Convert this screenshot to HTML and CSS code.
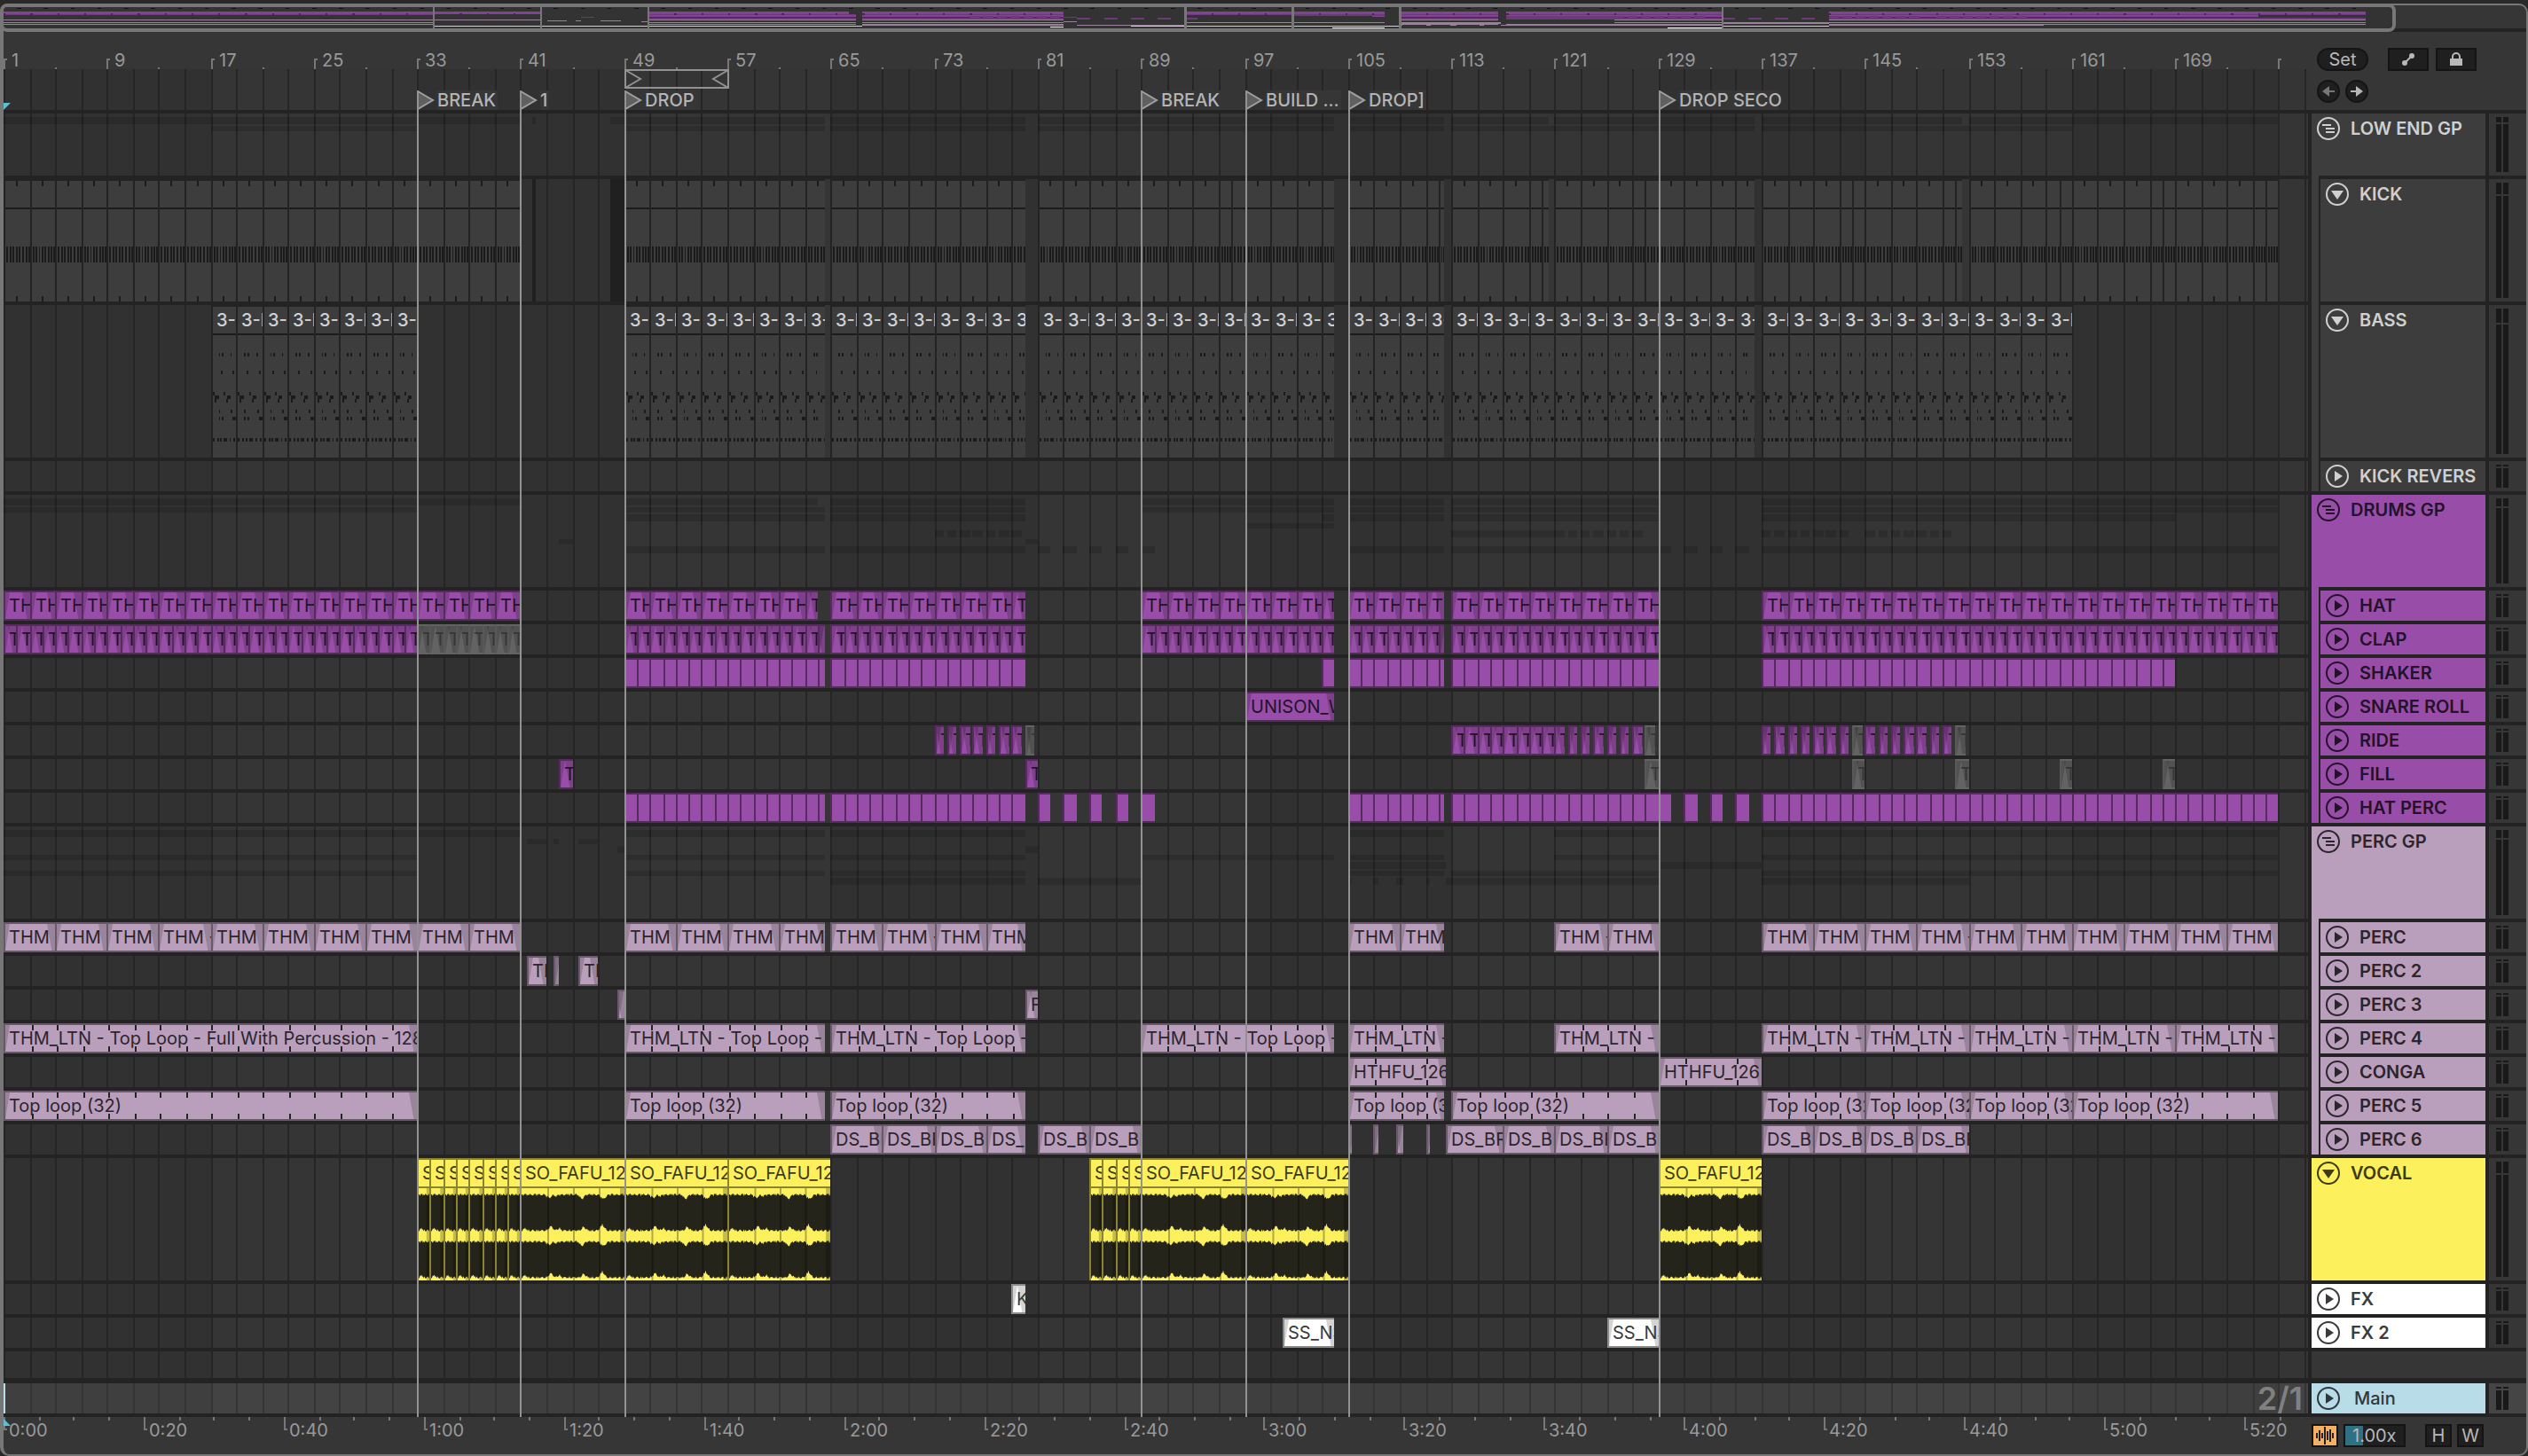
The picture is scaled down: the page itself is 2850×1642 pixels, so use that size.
FILE: index.html
```html
<!DOCTYPE html>
<html lang="en">
  <head>
    <meta charset="UTF-8" />
    <title>Arrangement</title>
    <link rel="stylesheet" href="styles.css">
  </head>
  <body>
    <div class="app">
      <div class="overview">
        <div class="overview-box">
          <svg id="overview" viewBox="1 0 178 24" preserveAspectRatio="none"></svg>
        </div>
      </div>

      <div class="arrange">
        <div class="grid"><div class="scale" id="grid"></div></div>

        <div class="top">
          <div class="beat-ruler">
            <div class="scale" id="bars"></div>
            <div class="scale" id="locators"></div>
            <svg class="start-mark" viewBox="0 0 8 8"><path d="M0 0h8L0 8z" /></svg>
          </div>
          <div class="top-controls">
            <div class="control-row">
              <button class="pill">Set</button>
              <button class="square first" aria-label="Automation">
                <svg viewBox="0 0 16 16"><path d="M4 12 12 4" stroke="#b8b8b8" stroke-width="2" /><circle cx="4" cy="12" r="3" /><circle cx="12" cy="4" r="3" /></svg>
              </button>
              <button class="square" aria-label="Lock envelopes">
                <svg viewBox="0 0 16 16"><path d="M1 7h14v8H1z" /><path d="M4 8V5a4 4 0 0 1 8 0v3" fill="none" stroke="#b8b8b8" stroke-width="2" /></svg>
              </button>
            </div>
            <div class="control-row">
              <button class="round dim" aria-label="Previous locator">
                <svg viewBox="0 0 16 16"><path d="M1 8l8-6v5h6v2H9v5z" /></svg>
              </button>
              <button class="round" aria-label="Next locator">
                <svg viewBox="0 0 16 16"><path d="M15 8L7 2v5H1v2h6v5z" /></svg>
              </button>
            </div>
          </div>
        </div>

        <div id="tracks"></div>

        <div class="lines"><div class="scale" id="lines"></div></div>
      </div>

      <div class="bottom">
        <div class="time-ruler">
          <div class="scale" id="times"></div>
          <svg class="start-mark" viewBox="0 0 8 8"><path d="M0 0l8 8H0z" /></svg>
        </div>
        <div class="bottom-controls">
          <button class="wave-button" aria-label="Waveform zoom">
            <svg viewBox="0 0 22 22"><path d="M2 8v6M5 5v12M8 8v6M11 1v20M14 6v10M17 4v14M20 8v6" stroke="#222" stroke-width="2" /></svg>
          </button>
          <input class="speed" type="text" value="1.00x" aria-label="Zoom factor" />
          <button class="letter first">H</button>
          <button class="letter">W</button>
        </div>
      </div>
    </div>

    <script src="script.js"></script>
  </body>
</html>
```
FILE: styles.css
```css
* {
  box-sizing: border-box;
}

body {
  margin: 0;
  padding-top: 4px;
  background-color: #292929;
  font-family: Inter, "Liberation Sans", sans-serif;
  font-size: 20px;
  line-height: 24px;
  color: #c8c8c8;
}

button,
input {
  font: inherit;
  padding: 0;
  margin: 0;
}

button svg {
  display: block;
  margin: auto;
}

.app {
  border: 2px solid #777;
  border-left-width: 4px;
  border-radius: 10px;
  background-color: #363636;
}

/* overview */

.overview {
  display: flex;
  height: 30px;
  border-bottom: 4px solid #232323;
}

.overview-box {
  flex: 1;
  height: 32px;
  margin: -2px 147px 0 -4px;
  border: 4px solid #777;
  border-radius: 8px;
  background-color: #333;
}

.overview-box svg {
  display: block;
  width: 100%;
  height: 24px;
}

/* timeline scale, 178 bars wide */

.scale {
  position: relative;
  height: 100%;
  margin-right: 4px;
}

.at,
.clip,
.mini i {
  position: absolute;
  left: round(nearest, calc((var(--s) - 1) / 178 * 100%), 2px);
}

.clip,
.band,
.loop,
.mini i {
  width: calc(round(nearest, calc((var(--e) - 1) / 178 * 100%), 2px) - round(nearest, calc((var(--s) - 1) / 178 * 100%), 2px));
}

.arrange {
  position: relative;
}

.grid,
.lines {
  position: absolute;
  left: 0;
  right: 246px;
  bottom: 0;
}

.grid {
  top: 42px;
  overflow: hidden;
  background-color: #353535;
}

.lines {
  top: 66px;
  z-index: 3;
  pointer-events: none;
}

.band,
.grid-line,
.locator-line {
  top: 0;
  bottom: 0;
}

.band {
  background-color: #313131;
}

.grid-line {
  width: 2px;
  background-color: #252525;
}

.locator-line {
  width: 2px;
  background-color: #929292;
}

/* top */

.top {
  display: flex;
  height: 88px;
  position: relative;
}

.beat-ruler {
  flex: 1;
  position: relative;
}

#locators {
  position: absolute;
  top: 0;
  left: 0;
  right: 0;
}

.bar-tick {
  top: 30px;
  height: 12px;
  width: 4px;
  border-left: 2px solid #777;
  border-top: 2px solid #777;
}

.bar-tick.minor {
  top: 40px;
  height: 2px;
  width: 2px;
  border-top: 0;
}

.bar-number {
  top: 20px;
  padding-left: 9px;
  color: #999;
}

.loop {
  top: 42px;
  height: 22px;
}

.loop svg {
  display: block;
  height: 22px;
  width: 118px;
}

.locator {
  top: 66px;
  height: 22px;
  display: flex;
  gap: 3px;
  line-height: 22px;
  font-weight: 500;
  color: #b4b4b4;
}

.locator svg {
  width: 20px;
  height: 22px;
}

.locator span {
  max-width: 112px;
  padding-right: 2px;
  background-color: #363636;
  white-space: nowrap;
}

.start-mark {
  position: absolute;
  left: 0;
  bottom: 0;
  width: 8px;
  height: 8px;
  fill: #5bbfd6;
}

.time-ruler .start-mark {
  top: 2px;
  bottom: auto;
}

.top-controls {
  width: 246px;
  padding: 18px 0 0 10px;
}

.control-row {
  display: flex;
  height: 26px;
  margin-bottom: 10px;
}

.pill,
.square,
.round,
.letter {
  height: 26px;
  border: 2px solid #141414;
  background-color: #1f1f1f;
  color: #b8b8b8;
  fill: #b8b8b8;
  line-height: 22px;
}

.pill {
  width: 58px;
  border-radius: 13px;
}

.square {
  width: 46px;
  margin-left: 8px;
}

.square.first {
  margin-left: 22px;
}

.square svg,
.round svg {
  width: 16px;
  height: 16px;
}

.round {
  width: 26px;
  border-radius: 50%;
  margin-right: 6px;
}

.round.dim {
  fill: #777;
}

/* tracks */

.track {
  display: flex;
  height: 38px;
  position: relative;
}

.track.size-low {
  height: 74px;
}

.track.size-kick {
  height: 142px;
}

.track.size-bass {
  height: 176px;
}

.track.size-group {
  height: 108px;
}

.track.size-blank {
  height: 34px;
}

.track.main {
  height: 44px;
  border-bottom: 4px solid #232323;
}

.lane {
  flex: 1;
  min-width: 0;
  border-top: 4px solid #232323;
}

.main .lane,
.main .head,
.main .meter {
  border-top-width: 6px;
}

.main .lane {
  position: relative;
  background-color: rgba(255, 255, 255, 0.07);
}

.main .scale {
  border-left: 2px solid #b8dce8;
}

.zoom-ratio {
  position: absolute;
  right: 6px;
  top: 0;
  font-size: 36px;
  line-height: 34px;
  font-weight: 600;
  color: #808080;
}

.strip {
  width: 12px;
  border-left: 4px solid #232323;
  background-color: var(--color);
}

.head {
  width: 200px;
  display: flex;
  gap: 12px;
  padding: 4px 0 0 6px;
  border-top: 4px solid #232323;
  border-left: 4px solid #232323;
  background-color: var(--color);
  background-clip: padding-box;
  color: var(--ink);
  font-weight: 600;
  line-height: 26px;
  white-space: nowrap;
  overflow: hidden;
}

.strip + .head {
  width: 188px;
  border-left-width: 2px;
}

.main .head {
  gap: 16px;
  font-weight: 500;
}

.fold {
  width: 26px;
  height: 26px;
  flex: none;
  border: 0;
  background: none;
  color: inherit;
}

.fold svg {
  width: 26px;
  height: 26px;
  fill: none;
  stroke: currentColor;
  stroke-width: 2;
}

.fold .solid {
  fill: currentColor;
  stroke: none;
}

.meter {
  width: 46px;
  display: grid;
  grid-template-columns: 6px 6px;
  grid-template-rows: 1fr 9fr;
  gap: 2px;
  padding: 4px 0 4px 8px;
  border-top: 4px solid #232323;
  border-left: 4px solid #232323;
  background-color: #363636;
}

.meter i {
  background-color: #191919;
}

.main .meter {
  background-color: #454545;
}

.blank-head {
  width: 246px;
  border-top: 4px solid #232323;
  border-left: 4px solid #232323;
  background-color: #363636;
}

.gray {
  --color: #3d3d3d;
  --edge: #232323;
  --ink: #d0d0d0;
}

.purple {
  --color: #984ea8;
  --edge: #562c5f;
  --ink: #231228;
}

.pink {
  --color: #b99fbc;
  --edge: #685969;
  --ink: #2b252c;
}

.yellow {
  --color: #fcf15d;
  --edge: #8a8333;
  --ink: #3d3b17;
}

.white {
  --color: #fff;
  --edge: #8b8b8b;
  --ink: #3b3b3b;
}

.blue {
  --color: #b8dce8;
  --ink: #2f383b;
}

/* clips */

.clip {
  top: 0;
  bottom: 0;
  overflow: hidden;
  border: 2px solid var(--edge);
  border-right: 0;
  background-color: var(--color);
  color: var(--ink);
}

.clip.fade::before,
.clip.fade::after {
  content: "";
  position: absolute;
  top: 0;
  bottom: 0;
  background-color: rgba(0, 0, 0, 0.17);
}

.clip.fade::before {
  left: 0;
  width: 5px;
  clip-path: polygon(0 0, 100% 0, 0 100%);
}

.clip.fade::after {
  right: 0;
  width: 9px;
  clip-path: polygon(0 0, 100% 0, 100% 100%, 60% 100%);
}

.clip.muted {
  --color: #636363;
  --ink: #363636;
  border-color: #585858;
  border-top-color: #636363;
  border-bottom-color: #636363;
}

.clip span {
  position: relative;
  z-index: 1;
  display: block;
  padding-left: 4px;
  line-height: 30px;
  white-space: nowrap;
}

.clip.gray span {
  font-weight: 500;
}

.clip .tick {
  position: absolute;
  left: round(nearest, var(--at), 2px);
  top: 0;
  bottom: 0;
  width: 2px;
  border-top: 6px solid #242424;
  border-bottom: 6px solid #242424;
}

.clip svg {
  position: absolute;
  left: 0;
  width: 100%;
}

.size-kick .gray.clip,
.size-bass .gray.clip {
  border-bottom: 0;
}

.clip.dark {
  border: 0;
  background-color: #202020;
}

.clip.yellow {
  border-bottom: 0;
}

.clip .header-line {
  height: 2px;
  background-color: var(--edge);
}

.clip .notes {
  top: 0;
  height: 100%;
  fill: #1b1b1b;
}

.clip .wave {
  top: 32px;
  height: 104px;
  fill: #25241a;
}

.minis {
  padding-top: 4px;
}

.mini {
  position: relative;
  height: 8px;
  margin-bottom: 2px;
}

.mini:nth-child(even) {
  height: 6px;
}

.mini i {
  top: 0;
  bottom: 0;
  background-color: rgba(0, 0, 0, 0.14);
}

/* bottom */

.bottom {
  display: flex;
  height: 42px;
}

.time-ruler {
  flex: 1;
  position: relative;
}

.time-tick {
  top: 0;
  height: 15px;
  width: 4px;
  border-left: 2px solid #777;
  border-bottom: 2px solid #777;
}

.time-tick.minor {
  height: 4px;
  width: 2px;
  border-bottom: 0;
}

.time {
  top: 3px;
  padding-left: 6px;
  color: #999;
}

.bottom-controls {
  width: 246px;
  display: flex;
  padding: 8px 0 0 4px;
}

.wave-button {
  width: 30px;
  height: 26px;
  border: 2px solid #141414;
  background-color: #f6b065;
}

.wave-button svg {
  width: 22px;
  height: 22px;
}

.speed {
  width: 70px;
  height: 26px;
  margin-left: 6px;
  padding-left: 8px;
  border: 2px solid #141414;
  border-radius: 0;
  background: linear-gradient(to right, #2f7182 20px, #1f1f1f 20px);
  color: #b8b8b8;
}

.letter {
  width: 30px;
  margin-left: 6px;
}

.letter.first {
  margin-left: 22px;
}
```
FILE: script.js
```javascript
// repeat(start, end, step) cuts a range of bars into clips
function repeat(start, end, step, extra) {
  const out = [];
  for (let s = start; s < end; s += step) {
    out.push({ s: s, e: Math.min(s + step, end), ...extra });
  }
  return out;
}

function cut(ranges, step, extra) {
  return ranges.flatMap(([s, e]) => repeat(s, e, step, extra));
}

function whole(ranges, extra) {
  return ranges.map(([s, e]) => ({ s: s, e: e, ...extra }));
}

// kick clips also break one bar before some of the sections
const kickBreaks = [96, 112, 120, 128, 144, 152, 160, 168, 176];

function kick(ranges) {
  return cut(ranges, 2).flatMap((c) => {
    const mid = c.s + 1;
    return kickBreaks.includes(mid) && c.e > mid
      ? [{ s: c.s, e: mid }, { s: mid, e: c.e }]
      : [c];
  });
}

function each(bars, length, extra) {
  return bars.map((b) => ({ s: b, e: b + length, ...extra }));
}

const muted = { muted: true };
const main = [[49, 64.5], [65, 80]];
const late = [[105, 112.4], [113, 129], [137, 177]];

const clips = {
  kick: [
    ...kick([[1, 41], [49, 64.5], [65, 80], [81, 103.9], [105, 112.4], [113, 120.5], [121, 136.5], [137, 152.5], [153, 177]]),
    { s: 41.9, e: 42.2, dark: true },
    { s: 48, e: 49, dark: true },
  ],
  bass: cut([[17, 33], ...main, [81, 103.9], [105, 112.4], [113, 136.5], [137, 161]], 2),
  kickrev: [],
  hat: cut([[1, 41], [49, 64], [65, 80], [89, 103.9], ...late], 2),
  clap: [...cut([[1, 33], ...main, [89, 103.9], ...late], 1), ...repeat(33, 41, 1, muted)],
  shaker: cut([...main, [103, 103.9], [105, 112.4], [113, 129], [137, 169]], 1),
  snare: [{ s: 97, e: 103.9 }],
  ride: [
    ...each([73, 74, 75, 76, 77, 78, 79], 0.75),
    ...repeat(113, 121, 1),
    ...each([121, 122, 123, 124, 125, 126, 127], 0.75),
    ...each([137, 138, 139, 140, 141, 142, 143, 145, 146, 147, 148, 149, 150, 151], 0.75),
    ...each([80, 128, 144, 152], 0.8, muted),
  ],
  fill: [...each([44, 80], 1), ...each([128, 144, 152, 160, 168], 1, muted)],
  hatperc: [...cut([...main, [105, 112.4], [113, 130], [137, 177]], 1), ...each([81, 83, 85, 87, 89, 131, 133, 135], 1)],
  perc: cut([[1, 41], ...main, [105, 112.4], [121, 129], [137, 177]], 4),
  perc2: whole([[41.5, 43], [43.6, 44], [45.5, 47]]),
  perc3: whole([[48.5, 49], [80, 81]]),
  perc4: whole([[1, 33], ...main, [89, 103.9], [105, 112.4], [121, 129], [137, 145], [145, 153], [153, 161], [161, 169], [169, 177]]),
  conga: whole([[105, 112.6], [129, 137]]),
  perc5: whole([[1, 33], ...main, [105, 112.4], [113, 129], [137, 145], [145, 153], [153, 161], [161, 177]]),
  perc6: [
    ...cut([[65, 80], [81, 89], [117, 129], [137, 153]], 4),
    ...whole([[105, 105.25], [107, 107.35], [108.8, 109.3], [111, 111.3], [112.6, 117]]),
  ],
  vocal: [...cut([[33, 41], [85, 89]], 1), ...cut([[41, 65], [89, 105], [129, 137]], 8)],
  fx: [{ s: 79, e: 80 }],
  fx2: whole([[100, 103.9], [125, 129]]),
};

const labels = {
  bass: "3-MIDI",
  hat: "THM_LTN",
  clap: "THM_LTN",
  snare: "UNISON_WHITE",
  ride: "THM_LTN",
  fill: "THM_LTN",
  perc: "THM - LTN",
  perc2: "THM",
  perc3: "FILL",
  perc4: "THM_LTN - Top Loop - Full With Percussion - 128",
  conga: "HTHFU_126",
  perc5: "Top loop (32)",
  perc6: "DS_BRK",
  vocal: "SO_FAFU_126",
  fx: "KSHMR",
  fx2: "SS_NSE",
};

const tracks = [
  { name: "LOW END GP", color: "gray", size: "low", group: ["kick", "bass", "kickrev"] },
  { id: "kick", name: "KICK", color: "gray", size: "kick", child: true, open: true },
  { id: "bass", name: "BASS", color: "gray", size: "bass", child: true, open: true },
  { id: "kickrev", name: "KICK REVERS", color: "gray", child: true },
  { name: "DRUMS GP", color: "purple", size: "group", group: ["hat", "clap", "shaker", "snare", "ride", "fill", "hatperc"] },
  { id: "hat", name: "HAT", color: "purple", child: true },
  { id: "clap", name: "CLAP", color: "purple", child: true },
  { id: "shaker", name: "SHAKER", color: "purple", child: true },
  { id: "snare", name: "SNARE ROLL", color: "purple", child: true },
  { id: "ride", name: "RIDE", color: "purple", child: true },
  { id: "fill", name: "FILL", color: "purple", child: true },
  { id: "hatperc", name: "HAT PERC", color: "purple", child: true },
  { name: "PERC GP", color: "pink", size: "group", group: ["perc", "perc2", "perc3", "perc4", "conga", "perc5", "perc6"] },
  { id: "perc", name: "PERC", color: "pink", child: true },
  { id: "perc2", name: "PERC 2", color: "pink", child: true },
  { id: "perc3", name: "PERC 3", color: "pink", child: true },
  { id: "perc4", name: "PERC 4", color: "pink", child: true },
  { id: "conga", name: "CONGA", color: "pink", child: true },
  { id: "perc5", name: "PERC 5", color: "pink", child: true },
  { id: "perc6", name: "PERC 6", color: "pink", child: true },
  { id: "vocal", name: "VOCAL", color: "yellow", size: "kick", open: true },
  { id: "fx", name: "FX", color: "white" },
  { id: "fx2", name: "FX 2", color: "white" },
  { blank: true },
  { name: "Main", color: "blue", main: true },
];

const locators = [
  [33, "BREAK"],
  [41, "1"],
  [49, "DROP"],
  [89, "BREAK"],
  [97, "BUILD ..."],
  [105, "DROP]"],
  [129, "DROP SECO"],
];

function place(s, e) {
  return e === undefined ? `style="--s:${s}"` : `style="--s:${s};--e:${e}"`;
}

// only as many letters as the clip has room for
function label(id, c) {
  const room = (c.e - c.s) * 14.6 - 5;
  return labels[id].slice(0, Math.ceil(room / 10));
}

// notes, drawn 29 units wide for two bars
function rects(list) {
  return list.map(([x, y, w, h]) => `<rect x="${x}" y="${y}" width="${w}" height="${h}"/>`).join("");
}

function notesSvg(width, height, shapes) {
  return `<svg class="notes" viewBox="0 0 ${width} ${height}" preserveAspectRatio="none" shape-rendering="crispEdges">${rects(shapes)}</svg>`;
}

function kickNotes(c) {
  const width = (c.e - c.s) * 14;
  const shapes = [[0, 30, width, 2]];
  for (let x = 1; x < width; x += 3.6) shapes.push([x, 74, 2, 18]);
  if (c.e - c.s > 1.4) shapes.push([12, 0, 2, 6], [12, 130, 2, 6]);
  return notesSvg(width, 136, shapes);
}

function bassNotes(c) {
  const all = [
    [7, 52, 2, 4], [11, 52, 2, 4], [21, 52, 2, 4],
    [10, 72, 2, 4], [24, 72, 2, 4],
    [0, 96, 2, 4], [13, 96, 2, 4],
    [2, 100, 5, 4], [17, 100, 4, 4],
    [2, 104, 2, 4], [16, 104, 2, 4],
    [7, 116, 2, 4], [22, 116, 2, 4],
    [7, 124, 2, 4], [11, 124, 2, 4], [24, 124, 4, 4],
    [0, 148, 2, 4], [5, 148, 2, 4], [9, 148, 2, 4], [13, 148, 4, 4], [20, 148, 2, 4], [25, 148, 2, 4],
  ];
  const width = (c.e - c.s) * 14;
  return notesSvg(width, 170, [[0, 30, width, 2], ...all.filter((n) => n[0] < width)]);
}

// two channels, the same envelope in each
function waveSvg(c) {
  const bars = c.e - c.s;
  const width = Math.round(bars * 14.5);
  const bump = (x, at, w, h) => Math.max(0, 1 - Math.abs(x - at) / w) * h;
  const noise = (x, k) => Math.abs(Math.sin(x * 1.7 + k) * Math.cos(x * 0.61 + k * 2)) * 3;
  const up = (x) => 21 - noise(x, 1) - bump(x, 31, 5, 4) - bump(x, 39, 4, 2) - bump(x, 68, 5, 5) - bump(x, 92, 6, 5);
  const down = (x) => 22 - noise(x, 4) - bump(x, 4, 3, 3) - bump(x, 33, 5, 5) - bump(x, 42, 4, 3) - bump(x, 70, 5, 4) - bump(x, 91, 5, 7);
  const channel = (mid) => {
    const a = [];
    const b = [];
    for (let x = 0; x <= width; x++) {
      a.push(`${x} ${(mid - up(x)).toFixed(1)}`);
      b.unshift(`${x} ${(mid + down(x)).toFixed(1)}`);
    }
    return `<path d="M${a.join("L")}L${b.join("L")}z"/>`;
  };
  let marks = "";
  for (let bar = 2; bar < bars; bar += 2) {
    marks += `<rect x="${bar * 14.5}" y="0" width="2" height="104" fill="#000" opacity=".3"/>`;
  }
  const fade = bars > 1 ? 5 : 4;
  return `<svg class="wave" viewBox="0 0 ${width} 104" preserveAspectRatio="none">
    ${channel(27)}${channel(80)}${marks}
    <rect x="${width - fade}" y="0" width="${fade}" height="104" fill="#000" opacity=".22"/></svg>`;
}

function ticks(id, c) {
  const list = { perc4: [2, 2], perc5: [2, 2], conga: [2, 4] }[id];
  if (!list) return "";
  let out = "";
  for (let b = list[0]; b < c.e - c.s; b += list[1]) {
    out += `<i class="tick" style="--at:${((b / (c.e - c.s)) * 100).toFixed(2)}%"></i>`;
  }
  return out;
}

function clipHtml(track, c) {
  const id = track.id;
  if (c.dark) return `<div class="clip dark" ${place(c.s, c.e)}></div>`;
  let inner = "";
  if (labels[id] && c.e - c.s >= 0.7) inner += `<span>${label(id, c)}</span>`;
  if (id === "kick") inner += kickNotes(c);
  if (id === "bass") inner += bassNotes(c);
  if (id === "vocal") inner += `<div class="header-line"></div>` + waveSvg(c);
  inner += ticks(id, c);
  const fade = !["kick", "bass", "shaker", "hatperc", "vocal"].includes(id);
  return `<div class="clip ${track.color} ${fade ? "fade" : ""} ${c.muted ? "muted" : ""}" ${place(c.s, c.e)}>${inner}</div>`;
}

// join clips that touch
function merged(list) {
  const out = [];
  [...list].filter((c) => !c.muted).sort((a, b) => a.s - b.s).forEach((c) => {
    const last = out[out.length - 1];
    if (last && c.s <= last.e) last.e = Math.max(last.e, c.e);
    else out.push({ s: c.s, e: c.e });
  });
  return out;
}

function icon(track) {
  let shape = '<path class="solid" d="M10 7v12l9-6z"/>';
  if (track.open) shape = '<path class="solid" d="M6 9h14l-7 10z"/>';
  if (track.group) shape = '<path d="M6 9h10M10 13h10M10 17h10"/>';
  return `<svg viewBox="0 0 26 26"><circle cx="13" cy="13" r="12"/>${shape}</svg>`;
}

function trackHtml(track) {
  if (track.blank) {
    return `<div class="track size-blank"><div class="lane"></div><div class="blank-head"></div></div>`;
  }
  let lane = "";
  if (track.group) {
    lane = track.group
      .map((id) => `<div class="mini">${merged(clips[id]).map((c) => `<i ${place(c.s, c.e)}></i>`).join("")}</div>`)
      .join("");
  } else if (track.id) {
    lane = clips[track.id].map((c) => clipHtml(track, c)).join("");
  }
  return `
    <div class="track size-${track.size || "small"} ${track.main ? "main" : ""}">
      <div class="lane">
        <div class="scale ${track.group ? "minis" : ""}">${lane}</div>
        ${track.main ? '<div class="zoom-ratio">2/1</div>' : ""}
      </div>
      ${track.child ? `<div class="strip ${track.color}"></div>` : ""}
      <div class="head ${track.color}">
        <button class="fold" aria-label="Fold ${track.name}">${icon(track)}</button>
        <span>${track.name}</span>
      </div>
      <div class="meter"><i></i><i></i><i></i><i></i></div>
    </div>`;
}

document.getElementById("tracks").innerHTML = tracks.map(trackHtml).join("");

// grid
let grid = "";
for (let b = 1; b < 177; b += 32) grid += `<div class="at band" ${place(b, b + 16)}></div>`;
for (let b = 1; b <= 179; b += 2) grid += `<div class="at grid-line" ${place(b)}></div>`;
document.getElementById("grid").innerHTML = grid;

// bar numbers
let bars = "";
for (let b = 1; b <= 177; b += 4) {
  const major = b % 8 === 1;
  bars += `<div class="at bar-tick ${major ? "" : "minor"}" ${place(b)}></div>`;
  if (major && b < 177) bars += `<div class="at bar-number" ${place(b)}>${b}</div>`;
}
document.getElementById("bars").innerHTML = bars;

// loop brace and locators
document.getElementById("locators").innerHTML =
  `<div class="at loop" ${place(49, 57)}><svg viewBox="0 0 118 22" fill="none" stroke="#929292" stroke-width="2"><path d="M1 1h116v20H1zM1 1l17 10L1 21M117 1L100 11l17 10"/></svg></div>` +
  locators
    .map(([b, name]) => `<div class="at locator" ${place(b)}><svg viewBox="0 0 20 22"><path d="M1 1l17 10L1 21z" fill="#606060" stroke="#a0a0a0" stroke-width="2"/></svg><span>${name}</span></div>`)
    .join("");
document.getElementById("lines").innerHTML = locators
  .map(([b]) => `<div class="at locator-line" ${place(b)}></div>`)
  .join("");

// time ruler at 130 bpm
let times = "";
for (let t = 0; t <= 325; t += 5) {
  const bar = (1 + (t * 130) / 240).toFixed(3);
  const major = t % 20 === 0;
  times += `<div class="at time-tick ${major ? "" : "minor"}" ${place(bar)}></div>`;
  if (major) {
    times += `<div class="at time" ${place(bar)}>${Math.floor(t / 60)}:${String(t % 60).padStart(2, "0")}</div>`;
  }
}
document.getElementById("times").innerHTML = times;

// overview
const rows = {
  hat: [5, 3, "#824392"], clap: [8, 1, "#6c3a78"], shaker: [9, 2, "#824392"], snare: [9, 1, "#6c3a78"],
  ride: [10, 2, "#6c3a78"], fill: [11, 1, "#6c3a78"], hatperc: [12, 2, "#6c3a78"],
  perc: [14, 1, "#998299"], perc2: [15, 1, "#998299"], perc3: [16, 1, "#998299"], perc4: [17, 1, "#998299"],
  conga: [17, 2, "#998299"], perc5: [19, 1, "#998299"], perc6: [20, 1, "#998299"],
  vocal: [21, 1, "#e8dd58"], fx: [22, 1, "#fff"], fx2: [23, 1, "#fff"],
};
let overview = "";
for (const id in rows) {
  const [y, h, fill] = rows[id];
  merged(clips[id]).forEach((c) => {
    overview += `<rect x="${c.s}" y="${y}" width="${c.e - c.s}" height="${h}" fill="${fill}"/>`;
  });
}
for (let b = 2; b < 177; b += 2) {
  overview += `<rect x="${b}" y="1" width=".3" height="1" fill="#111"/>`;
}
clips.hat.forEach((c) => {
  overview += `<rect x="${c.s}" y="7" width=".15" height="2" fill="#4a2752"/>`;
});
locators.forEach(([b]) => {
  overview += `<rect x="${b}" y="0" width=".15" height="24" fill="#777"/>`;
});
document.getElementById("overview").innerHTML = `<g shape-rendering="crispEdges">${overview}</g>`;
```
